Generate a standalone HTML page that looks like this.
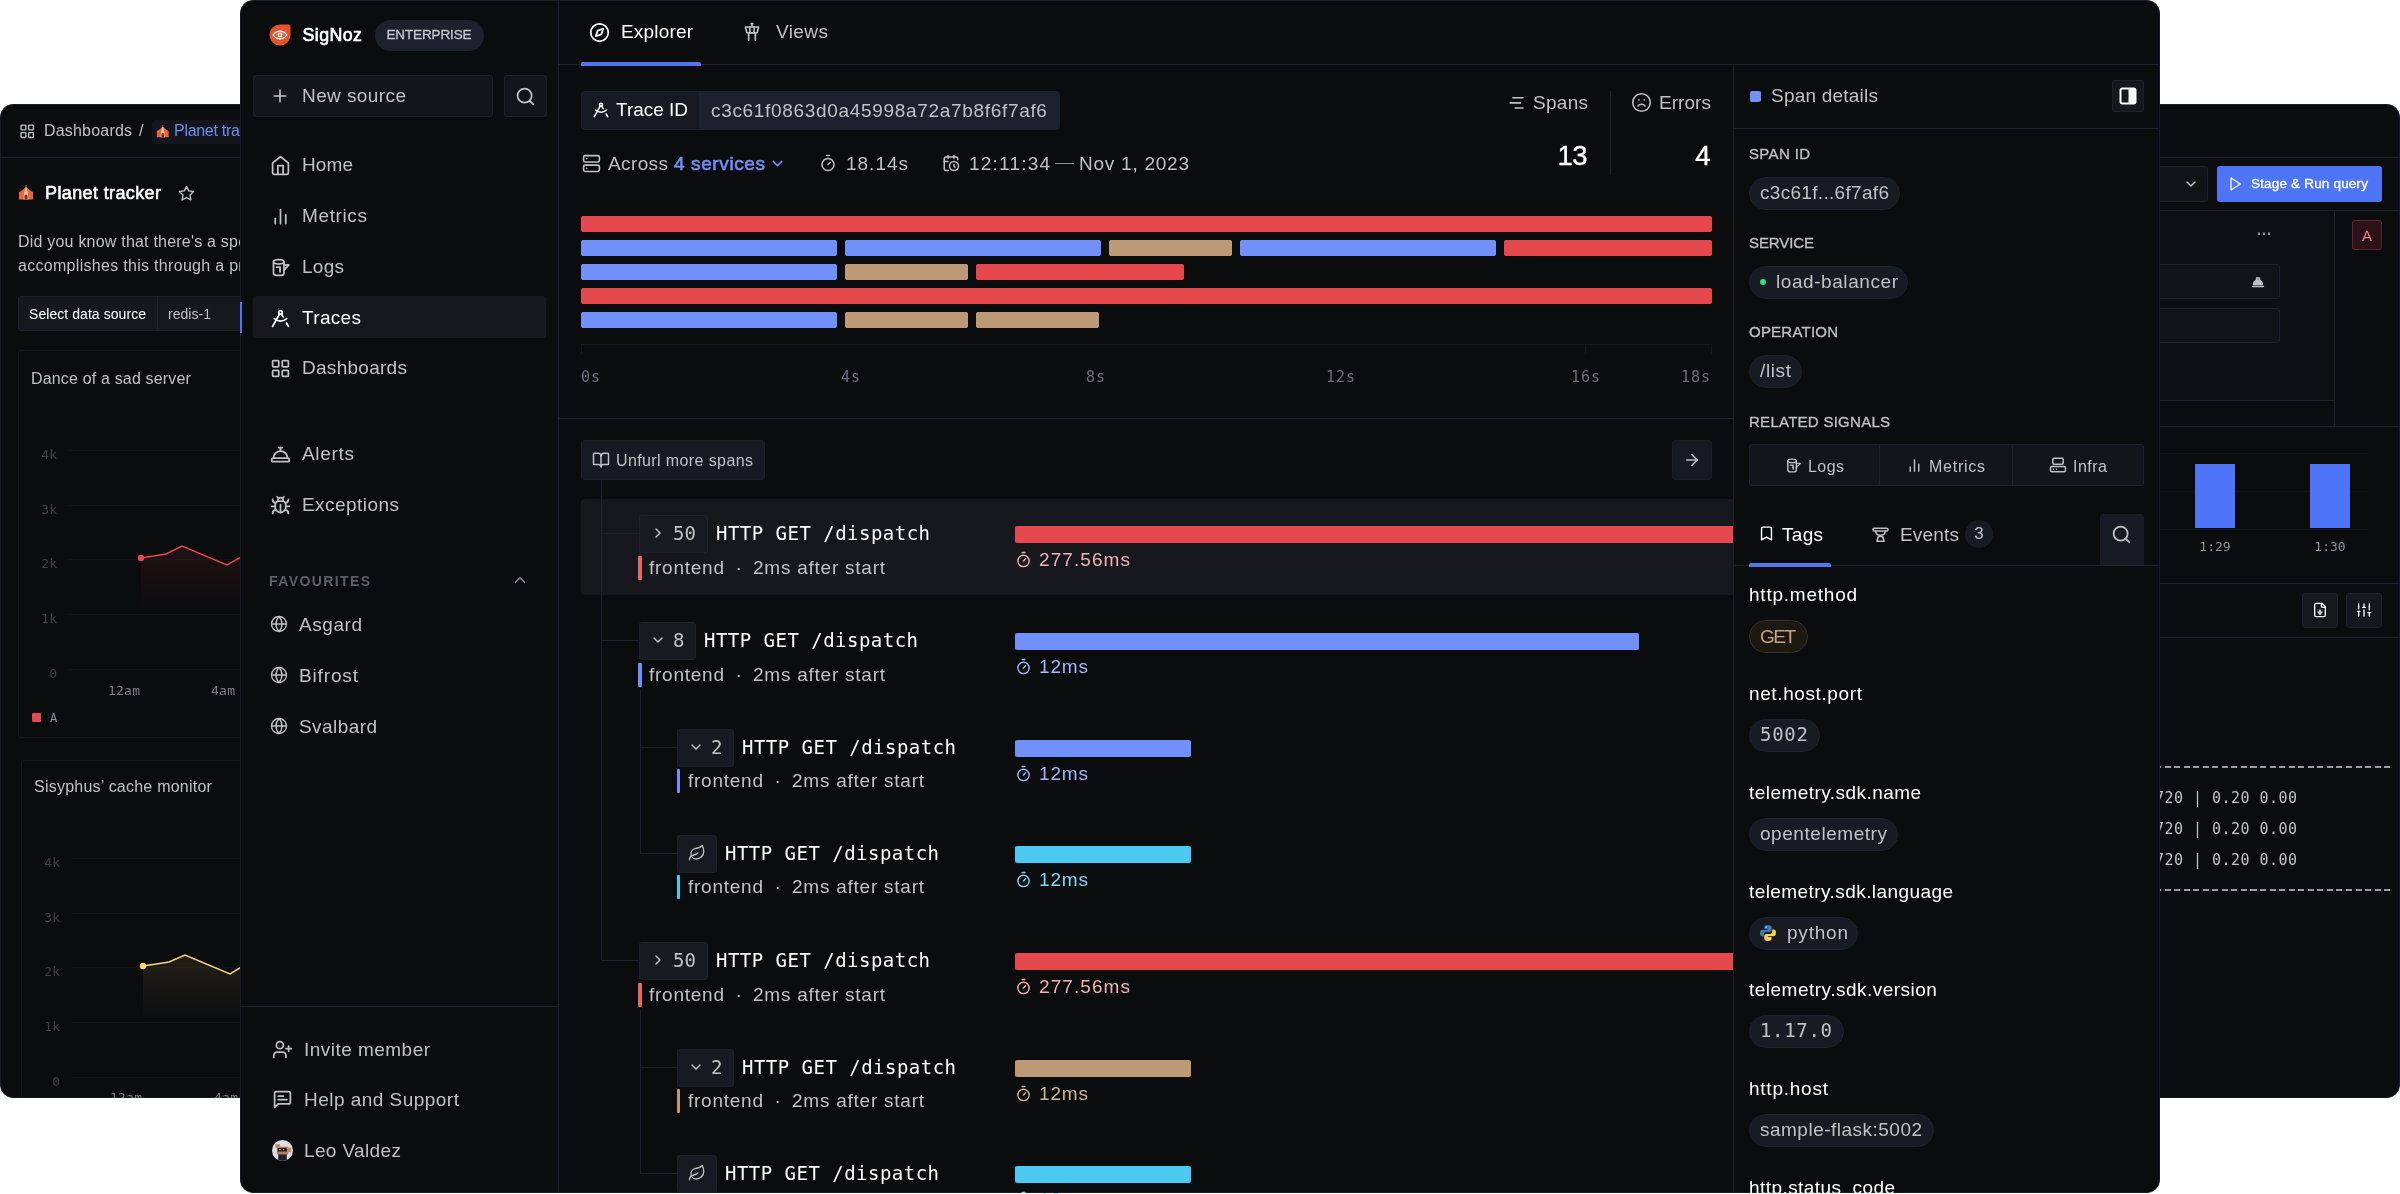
<!DOCTYPE html>
<html lang="en"><head><meta charset="utf-8"><title>SigNoz Traces</title>
<style>
html,body{margin:0;padding:0;background:#fff;}
body{width:2400px;height:1194px;position:relative;overflow:hidden;font-family:"Liberation Sans", sans-serif;}
.a{position:absolute;box-sizing:border-box;}
.t{white-space:nowrap;}
#stage{position:absolute;left:0;top:0;width:2400px;height:1194px;will-change:transform;}
</style></head>
<body>
<div id="stage">
<div class="a" style="left:0px;top:104px;width:300px;height:994px;background:#0b0c0e;border:1px solid #1a1d27;border-radius:13px 0 0 13px;"></div>
<div class="a" style="left:2100px;top:104px;width:300px;height:994px;background:#0b0c0e;border:1px solid #1a1d27;border-radius:0 13px 13px 0;"></div>
<svg class="a" style="left:19px;top:123px;" width="16.5" height="16.5" viewBox="0 0 24 24" fill="none" stroke="#c0c1c3" stroke-width="2" stroke-linecap="round" stroke-linejoin="round"><rect width="7" height="7" x="3" y="3" rx="1"/><rect width="7" height="7" x="14" y="3" rx="1"/><rect width="7" height="7" x="14" y="14" rx="1"/><rect width="7" height="7" x="3" y="14" rx="1"/></svg>
<div class="a t" id="t0" style="top:119.5px;font-size:16px;line-height:21px;color:#c0c1c3;left:44px;letter-spacing:0.19px;">Dashboards</div>
<div class="a t" id="t1" style="top:119.5px;font-size:16px;line-height:21px;color:#c0c1c3;left:139px;">/</div>
<div class="a" style="left:152px;top:119.5px;width:100px;height:24px;background:#13161f;border-radius:3px;"></div>
<svg class="a" style="left:155.5px;top:125px" width="13.5" height="13.5" viewBox="0 0 16 16"><path d="M8 1.500C5 5 2.500 6.500 1 7v7.500h14V7c-1.500-.500-4-2-7-5.500z" fill="#e8663c"/><path d="M8 1.500C7 5 6 7 5.500 14.500h5C10 7 9 5 8 1.500z" fill="#f7c9a8"/><path d="M6.500 14.500V11a1.500 1.500 0 0 1 3 0v3.500z" fill="#7a2e17"/><path d="M8 0v2" stroke="#e8663c" stroke-width="1"/></svg>
<div class="a t" id="t2" style="top:119.8px;font-size:16px;line-height:21px;color:#6e8ce6;left:174px;letter-spacing:-0.29px;">Planet tracker</div>
<div class="a" style="left:0px;top:157px;width:245px;height:1px;background:#1d212d;"></div>
<svg class="a" style="left:18px;top:184.7px" width="16" height="16" viewBox="0 0 16 16"><path d="M8 1.500C5 5 2.500 6.500 1 7v7.500h14V7c-1.500-.500-4-2-7-5.500z" fill="#e8663c"/><path d="M8 1.500C7 5 6 7 5.500 14.500h5C10 7 9 5 8 1.500z" fill="#f7c9a8"/><path d="M6.500 14.500V11a1.500 1.500 0 0 1 3 0v3.500z" fill="#7a2e17"/><path d="M8 0v2" stroke="#e8663c" stroke-width="1"/></svg>
<div class="a t" id="t3" style="top:181.8px;font-size:18px;line-height:23px;color:#ffffff;left:45px;letter-spacing:0.38px;-webkit-text-stroke:.550px #fff;">Planet tracker</div>
<svg class="a" style="left:178px;top:184.7px;" width="17" height="17" viewBox="0 0 24 24" fill="none" stroke="#c0c1c3" stroke-width="2" stroke-linecap="round" stroke-linejoin="round"><path d="M12 2l3.090 6.260L22 9.270l-5 4.870 1.180 6.880L12 17.770l-6.180 3.250L7 14.140 2 9.270l6.910-1.010z"/></svg>
<div class="a t" id="t4" style="top:230.5px;font-size:16px;line-height:21px;color:#c0c1c3;left:18px;letter-spacing:0.21px;">Did you know that there's a special</div>
<div class="a t" id="t5" style="top:254.5px;font-size:16px;line-height:21px;color:#c0c1c3;left:18px;letter-spacing:0.30px;">accomplishes this through a process</div>
<div class="a" style="left:18px;top:296px;width:230px;height:35px;background:#16181d;border:1px solid #1d212d;border-radius:3px;"></div>
<div class="a" style="left:157px;top:297px;width:1px;height:33px;background:#1d212d;"></div>
<div class="a t" id="t6" style="top:304.5px;font-size:14px;line-height:18px;color:#ffffff;left:29px;letter-spacing:0.06px;">Select data source</div>
<div class="a t" id="t7" style="top:304.5px;font-size:14px;line-height:18px;color:#c0c1c3;left:168px;letter-spacing:0.03px;">redis-1</div>
<div class="a" style="left:18px;top:350px;width:300px;height:388px;border:1px solid #16181d;border-radius:3px;"></div>
<div class="a t" id="t8" style="top:367.5px;font-size:16px;line-height:21px;color:#c0c1c3;left:31px;letter-spacing:0.17px;">Dance of a sad server</div>
<div class="a t" id="t9" style="top:445.5px;font-size:13px;line-height:17px;color:#3f4147;font-family:'DejaVu Sans Mono', 'Liberation Mono', monospace;right:2343px;">4k</div>
<div class="a" style="left:68px;top:450px;width:200px;height:1px;background:#111216;"></div>
<div class="a t" id="t10" style="top:500.5px;font-size:13px;line-height:17px;color:#3f4147;font-family:'DejaVu Sans Mono', 'Liberation Mono', monospace;right:2343px;">3k</div>
<div class="a" style="left:68px;top:505px;width:200px;height:1px;background:#111216;"></div>
<div class="a t" id="t11" style="top:554.5px;font-size:13px;line-height:17px;color:#3f4147;font-family:'DejaVu Sans Mono', 'Liberation Mono', monospace;right:2343px;">2k</div>
<div class="a" style="left:68px;top:559px;width:200px;height:1px;background:#111216;"></div>
<div class="a t" id="t12" style="top:609.5px;font-size:13px;line-height:17px;color:#3f4147;font-family:'DejaVu Sans Mono', 'Liberation Mono', monospace;right:2343px;">1k</div>
<div class="a" style="left:68px;top:614px;width:200px;height:1px;background:#111216;"></div>
<div class="a t" id="t13" style="top:664.5px;font-size:13px;line-height:17px;color:#3f4147;font-family:'DejaVu Sans Mono', 'Liberation Mono', monospace;right:2343px;">0</div>
<div class="a" style="left:68px;top:669px;width:200px;height:1px;background:#111216;"></div>
<svg class="a" style="left:0;top:0" width="245" height="1194"><defs><linearGradient id="g454" x1="0" y1="0" x2="0" y2="1"><stop offset="0" stop-color="#e5484d" stop-opacity=".100"/><stop offset="1" stop-color="#e5484d" stop-opacity="0"/></linearGradient></defs><polygon points="141,558 166,554 182,546 227,565 245,555 245,616 141,616" fill="url(#g454)"/><polyline points="141,558 166,554 182,546 227,565 245,555" fill="none" stroke="#e5484d" stroke-width="1.500"/><circle cx="141" cy="558" r="3.200" fill="#e5484d"/></svg>
<div class="a t" id="t14" style="top:681.5px;font-size:13px;line-height:17px;color:#7a7c82;font-family:'DejaVu Sans Mono', 'Liberation Mono', monospace;left:108px;letter-spacing:0.23px;">12am</div>
<div class="a t" id="t15" style="top:681.5px;font-size:13px;line-height:17px;color:#7a7c82;font-family:'DejaVu Sans Mono', 'Liberation Mono', monospace;left:211px;letter-spacing:0.26px;">4am</div>
<div class="a" style="left:32px;top:713px;width:9px;height:9px;background:#e5484d;border-radius:1px;"></div>
<div class="a t" id="t16" style="top:710.0px;font-size:12px;line-height:16px;color:#8d919d;font-family:'DejaVu Sans Mono', 'Liberation Mono', monospace;left:50px;">A</div>
<div class="a" style="left:21px;top:760px;width:300px;height:400px;border:1px solid #16181d;border-radius:3px;"></div>
<div class="a t" id="t17" style="top:775.5px;font-size:16px;line-height:21px;color:#c0c1c3;left:34px;letter-spacing:0.23px;">Sisyphus’ cache monitor</div>
<div class="a t" id="t18" style="top:853.5px;font-size:13px;line-height:17px;color:#3f4147;font-family:'DejaVu Sans Mono', 'Liberation Mono', monospace;right:2340px;">4k</div>
<div class="a" style="left:71px;top:858px;width:200px;height:1px;background:#111216;"></div>
<div class="a t" id="t19" style="top:908.5px;font-size:13px;line-height:17px;color:#3f4147;font-family:'DejaVu Sans Mono', 'Liberation Mono', monospace;right:2340px;">3k</div>
<div class="a" style="left:71px;top:913px;width:200px;height:1px;background:#111216;"></div>
<div class="a t" id="t20" style="top:962.5px;font-size:13px;line-height:17px;color:#3f4147;font-family:'DejaVu Sans Mono', 'Liberation Mono', monospace;right:2340px;">2k</div>
<div class="a" style="left:71px;top:967px;width:200px;height:1px;background:#111216;"></div>
<div class="a t" id="t21" style="top:1017.5px;font-size:13px;line-height:17px;color:#3f4147;font-family:'DejaVu Sans Mono', 'Liberation Mono', monospace;right:2340px;">1k</div>
<div class="a" style="left:71px;top:1022px;width:200px;height:1px;background:#111216;"></div>
<div class="a t" id="t22" style="top:1072.5px;font-size:13px;line-height:17px;color:#3f4147;font-family:'DejaVu Sans Mono', 'Liberation Mono', monospace;right:2340px;">0</div>
<div class="a" style="left:71px;top:1077px;width:200px;height:1px;background:#111216;"></div>
<svg class="a" style="left:0;top:0" width="245" height="1194"><defs><linearGradient id="g862" x1="0" y1="0" x2="0" y2="1"><stop offset="0" stop-color="#f5d77a" stop-opacity=".100"/><stop offset="1" stop-color="#f5d77a" stop-opacity="0"/></linearGradient></defs><polygon points="143,966 169,962 185,955 230,974 245,965 245,1024 143,1024" fill="url(#g862)"/><polyline points="143,966 169,962 185,955 230,974 245,965" fill="none" stroke="#f5d77a" stroke-width="1.500"/><circle cx="143" cy="966" r="3.200" fill="#f5d77a"/></svg>
<div class="a t" id="t23" style="top:1088.5px;font-size:13px;line-height:17px;color:#7a7c82;font-family:'DejaVu Sans Mono', 'Liberation Mono', monospace;left:110px;letter-spacing:0.23px;">12am</div>
<div class="a t" id="t24" style="top:1088.5px;font-size:13px;line-height:17px;color:#7a7c82;font-family:'DejaVu Sans Mono', 'Liberation Mono', monospace;left:214px;letter-spacing:0.26px;">4am</div>
<div class="a" style="left:0px;top:1098px;width:240px;height:96px;background:#ffffff;"></div>
<div class="a" style="left:2155px;top:157px;width:245px;height:1px;background:#1d212d;"></div>
<div class="a" style="left:2100px;top:166px;width:108px;height:36px;background:#121317;border:1px solid #1d212d;border-radius:3px;"></div>
<svg class="a" style="left:2183px;top:176px;" width="16" height="16" viewBox="0 0 24 24" fill="none" stroke="#c0c1c3" stroke-width="2.2" stroke-linecap="round" stroke-linejoin="round"><path d="m6 9 6 6 6-6"/></svg>
<div class="a" style="left:2217px;top:166px;width:165px;height:36px;background:#4e74f8;border-radius:3px;"></div>
<svg class="a" style="left:2227px;top:176px;" width="16" height="16" viewBox="0 0 24 24" fill="none" stroke="#ffffff" stroke-width="2" stroke-linecap="round" stroke-linejoin="round"><path d="M6 3l14 9-14 9z"/></svg>
<div class="a t" id="t25" style="top:175.0px;font-size:13.5px;line-height:18px;color:#ffffff;left:2251px;letter-spacing:0.18px;-webkit-text-stroke:.350px #fff;">Stage &amp; Run query</div>
<div class="a" style="left:2155px;top:211px;width:179px;height:189px;background:#0e0f13;"></div>
<div class="a" style="left:2155px;top:210px;width:245px;height:1px;background:#1d212d;"></div>
<div class="a" style="left:2334px;top:211px;width:1px;height:215px;background:#1d212d;"></div>
<div class="a t" id="t26" style="top:218.5px;font-size:16px;line-height:21px;color:#8d919d;font-weight:700;left:2264px;transform:translateX(-50%);">…</div>
<div class="a" style="left:2352px;top:220px;width:30px;height:30px;background:#2a1218;border:1px solid #5c2530;border-radius:3px;"></div>
<div class="a t" id="t27" style="top:226.0px;font-size:15px;line-height:20px;color:#f27a88;left:2367px;transform:translateX(-50%);">A</div>
<div class="a" style="left:2100px;top:264px;width:180px;height:35px;background:#121317;border:1px solid #1d212d;border-radius:3px;"></div>
<svg class="a" style="left:2251px;top:275px" width="14" height="13" viewBox="0 0 14 13" fill="none" stroke="#c0c1c3" stroke-width="1.400" stroke-linecap="round" stroke-linejoin="round"><path d="M1.500 11.500h11"/><path d="M2.500 9.500a4.500 4.500 0 0 1 9 0z" fill="#c0c1c3"/><path d="M5.500 5V3h3v2"/></svg>
<div class="a" style="left:2100px;top:308px;width:180px;height:35px;background:#121317;border:1px solid #1d212d;border-radius:3px;"></div>
<div class="a" style="left:2155px;top:400px;width:180px;height:1px;background:#1d212d;"></div>
<div class="a" style="left:2155px;top:426px;width:245px;height:1px;background:#1d212d;"></div>
<div class="a" style="left:2160px;top:453px;width:208px;height:1px;background:#111216;"></div>
<div class="a" style="left:2160px;top:491px;width:208px;height:1px;background:#111216;"></div>
<div class="a" style="left:2160px;top:529px;width:208px;height:1px;background:#111216;"></div>
<div class="a" style="left:2195px;top:464px;width:40px;height:64px;background:#4e74f8;"></div>
<div class="a" style="left:2310px;top:464px;width:40px;height:64px;background:#4e74f8;"></div>
<div class="a t" id="t28" style="top:537.5px;font-size:13px;line-height:17px;color:#8d919d;font-family:'DejaVu Sans Mono', 'Liberation Mono', monospace;left:2215px;transform:translateX(-50%);">1:29</div>
<div class="a t" id="t29" style="top:537.5px;font-size:13px;line-height:17px;color:#8d919d;font-family:'DejaVu Sans Mono', 'Liberation Mono', monospace;left:2330px;transform:translateX(-50%);">1:30</div>
<div class="a" style="left:2155px;top:583px;width:245px;height:1px;background:#1d212d;"></div>
<div class="a" style="left:2302px;top:593px;width:36px;height:35px;background:#16181d;border:1px solid #1d212d;border-radius:3px;"></div>
<svg class="a" style="left:2312px;top:602px;" width="16" height="16" viewBox="0 0 24 24" fill="none" stroke="#ffffff" stroke-width="2" stroke-linecap="round" stroke-linejoin="round"><path d="M15 2H6a2 2 0 0 0-2 2v16a2 2 0 0 0 2 2h12a2 2 0 0 0 2-2V7z"/><path d="M14 2v4a2 2 0 0 0 2 2h4"/><path d="M12 18v-6"/><path d="m9 15 3 3 3-3"/></svg>
<div class="a" style="left:2346px;top:593px;width:36px;height:35px;background:#16181d;border:1px solid #1d212d;border-radius:3px;"></div>
<svg class="a" style="left:2356px;top:602px;" width="16" height="16" viewBox="0 0 24 24" fill="none" stroke="#ffffff" stroke-width="2" stroke-linecap="round" stroke-linejoin="round"><path d="M4 21v-7"/><path d="M4 10V3"/><path d="M12 21v-9"/><path d="M12 8V3"/><path d="M20 21v-5"/><path d="M20 12V3"/><path d="M2 14h4"/><path d="M10 8h4"/><path d="M18 16h4"/></svg>
<div class="a" style="left:2155px;top:637px;width:245px;height:1px;background:#1d212d;"></div>
<div class="a" style="left:2155px;top:766px;width:237px;height:2px;background:repeating-linear-gradient(90deg,#9a9da6 0 6px,transparent 6px 9.550px);"></div>
<div class="a t" id="t30" style="top:788.0px;font-size:15px;line-height:20px;color:#c0c1c3;font-family:'DejaVu Sans Mono', 'Liberation Mono', monospace;left:2155px;letter-spacing:0.47px;">720 | 0.20 0.00</div>
<div class="a t" id="t31" style="top:819.0px;font-size:15px;line-height:20px;color:#c0c1c3;font-family:'DejaVu Sans Mono', 'Liberation Mono', monospace;left:2155px;letter-spacing:0.47px;">720 | 0.20 0.00</div>
<div class="a t" id="t32" style="top:850.0px;font-size:15px;line-height:20px;color:#c0c1c3;font-family:'DejaVu Sans Mono', 'Liberation Mono', monospace;left:2155px;letter-spacing:0.47px;">720 | 0.20 0.00</div>
<div class="a" style="left:2155px;top:889px;width:237px;height:2px;background:repeating-linear-gradient(90deg,#9a9da6 0 6px,transparent 6px 9.550px);"></div>
<div class="a" style="left:240px;top:0px;width:1920px;height:1193px;background:#0b0c0e;border:1px solid #1a1d27;border-radius:13px;"></div>
<div class="a" style="left:558px;top:1px;width:1px;height:1191px;background:#1d212d;"></div>
<div class="a" style="left:559px;top:64px;width:1600px;height:1px;background:#1d212d;"></div>
<div class="a" style="left:1733px;top:65px;width:1px;height:1128px;background:#1d212d;"></div>
<svg class="a" style="left:268px;top:23px" width="24" height="24" viewBox="0 0 24 24"><path d="M12 1.5h8.2a2.3 2.3 0 0 1 2.3 2.3V12A10.5 10.5 0 1 1 12 1.5z" fill="#e5532d"/><path d="M5.2 12c1.8-2.6 4-3.9 6.8-3.9s5 1.300 6.800 3.900c-1.800 2.600-4 3.900-6.800 3.900S7 14.600 5.200 12z" fill="none" stroke="#fff" stroke-width="1.300"/><circle cx="12" cy="12" r="2.500" fill="#fff"/><circle cx="12" cy="12" r="1" fill="#e5532d"/></svg>
<div class="a t" id="t33" style="top:23.9px;font-size:17.8px;line-height:23px;color:#ffffff;left:302.5px;letter-spacing:0.43px;-webkit-text-stroke:.650px #fff;">SigNoz</div>
<div class="a" style="left:375px;top:20px;width:109px;height:31px;background:#1d212d;border-radius:16px;"></div>
<div class="a t" id="t34" style="top:25.8px;font-size:13.5px;line-height:18px;color:#c5c7cc;left:386.5px;letter-spacing:-0.14px;-webkit-text-stroke:.300px #c5c7cc;">ENTERPRISE</div>
<div class="a" style="left:253px;top:75px;width:240px;height:42px;background:#13151b;border:1px solid #1d212d;border-radius:3px;"></div>
<svg class="a" style="left:270px;top:86px;" width="20" height="20" viewBox="0 0 24 24" fill="none" stroke="#c0c1c3" stroke-width="2" stroke-linecap="round" stroke-linejoin="round"><path d="M5 12h14"/><path d="M12 5v14"/></svg>
<div class="a t" id="t35" style="top:83.0px;font-size:19px;line-height:25px;color:#c0c1c3;left:302px;letter-spacing:0.41px;">New source</div>
<div class="a" style="left:504px;top:75px;width:43px;height:42px;background:#13151b;border:1px solid #1d212d;border-radius:3px;"></div>
<svg class="a" style="left:515px;top:86px;" width="21" height="21" viewBox="0 0 24 24" fill="none" stroke="#c0c1c3" stroke-width="2" stroke-linecap="round" stroke-linejoin="round"><circle cx="11" cy="11" r="8"/><path d="m21 21-4.3-4.3"/></svg>
<div class="a" style="left:253px;top:296px;width:293px;height:42px;background:#16181d;border-radius:3px;"></div>
<div class="a" style="left:240px;top:302px;width:2px;height:31px;background:#4e74f8;"></div>
<svg class="a" style="left:269.5px;top:154.5px;" width="21" height="21" viewBox="0 0 24 24" fill="none" stroke="#c0c1c3" stroke-width="2" stroke-linecap="round" stroke-linejoin="round"><path d="m3 9 9-7 9 7v11a2 2 0 0 1-2 2H5a2 2 0 0 1-2-2z"/><path d="M9 22V12h6v10"/></svg>
<div class="a t" id="t36" style="top:152.0px;font-size:19px;line-height:25px;color:#c0c1c3;left:302px;letter-spacing:0.10px;">Home</div>
<svg class="a" style="left:269.5px;top:205.5px;" width="21" height="21" viewBox="0 0 24 24" fill="none" stroke="#c0c1c3" stroke-width="2" stroke-linecap="round" stroke-linejoin="round"><path d="M18 20V10"/><path d="M12 20V4"/><path d="M6 20v-6"/></svg>
<div class="a t" id="t37" style="top:203.0px;font-size:19px;line-height:25px;color:#c0c1c3;left:302px;letter-spacing:0.63px;">Metrics</div>
<svg class="a" style="left:269.5px;top:256.5px;" width="21" height="21" viewBox="0 0 24 24" fill="none" stroke="#c0c1c3" stroke-width="2" stroke-linecap="round" stroke-linejoin="round"><ellipse cx="10" cy="5.500" rx="6" ry="2.500"/><path d="M4 5.500V18a3 3 0 0 0 3 3h6a3 3 0 0 0 3-3V5.500"/><path d="M16 9h5.500L16 15"/><path d="M7.500 11.500h4v3"/><path d="M11.500 14.500v2.500"/></svg>
<div class="a t" id="t38" style="top:254.0px;font-size:19px;line-height:25px;color:#c0c1c3;left:302px;letter-spacing:0.27px;">Logs</div>
<svg class="a" style="left:269.5px;top:307.5px;" width="21" height="21" viewBox="0 0 24 24" fill="none" stroke="#ffffff" stroke-width="2" stroke-linecap="round" stroke-linejoin="round"><path d="m12.99 6.74 1.93 3.44"/><path d="M19.136 12a10 10 0 0 1-14.271 0"/><path d="m21 21-2.16-3.84"/><path d="m3 21 8.02-14.26"/><circle cx="12" cy="5" r="2"/></svg>
<div class="a t" id="t39" style="top:305.0px;font-size:19px;line-height:25px;color:#ffffff;left:302px;letter-spacing:0.33px;">Traces</div>
<svg class="a" style="left:269.5px;top:357.5px;" width="21" height="21" viewBox="0 0 24 24" fill="none" stroke="#c0c1c3" stroke-width="2" stroke-linecap="round" stroke-linejoin="round"><rect width="7" height="7" x="3" y="3" rx="1"/><rect width="7" height="7" x="14" y="3" rx="1"/><rect width="7" height="7" x="14" y="14" rx="1"/><rect width="7" height="7" x="3" y="14" rx="1"/></svg>
<div class="a t" id="t40" style="top:355.0px;font-size:19px;line-height:25px;color:#c0c1c3;left:302px;letter-spacing:0.28px;">Dashboards</div>
<svg class="a" style="left:269.5px;top:443.5px;" width="21" height="21" viewBox="0 0 24 24" fill="none" stroke="#c0c1c3" stroke-width="2" stroke-linecap="round" stroke-linejoin="round"><path d="M3 20a1 1 0 0 1-1-1v-1a2 2 0 0 1 2-2h16a2 2 0 0 1 2 2v1a1 1 0 0 1-1 1Z"/><path d="M20 16a8 8 0 1 0-16 0"/><path d="M12 4v4"/><path d="M10 4h4"/></svg>
<div class="a t" id="t41" style="top:441.0px;font-size:19px;line-height:25px;color:#c0c1c3;left:302px;letter-spacing:0.68px;">Alerts</div>
<svg class="a" style="left:269.5px;top:494.5px;" width="21" height="21" viewBox="0 0 24 24" fill="none" stroke="#c0c1c3" stroke-width="2" stroke-linecap="round" stroke-linejoin="round"><path d="m8 2 1.88 1.88"/><path d="M14.12 3.88 16 2"/><path d="M9 7.13v-1a3.003 3.003 0 1 1 6 0v1"/><path d="M12 20c-3.3 0-6-2.7-6-6v-3a4 4 0 0 1 4-4h4a4 4 0 0 1 4 4v3c0 3.3-2.7 6-6 6"/><path d="M12 20v-9"/><path d="M6.53 9C4.6 8.8 3 7.1 3 5"/><path d="M6 13H2"/><path d="M3 21c0-2.1 1.7-3.9 3.8-4"/><path d="M20.97 5c0 2.1-1.6 3.8-3.5 4"/><path d="M22 13h-4"/><path d="M17.2 17c2.1.1 3.8 1.9 3.8 4"/></svg>
<div class="a t" id="t42" style="top:492.0px;font-size:19px;line-height:25px;color:#c0c1c3;left:302px;letter-spacing:0.45px;">Exceptions</div>
<div class="a t" id="t43" style="top:572.0px;font-size:14px;line-height:18px;color:#5c5f68;font-weight:700;left:269px;letter-spacing:1.40px;">FAVOURITES</div>
<svg class="a" style="left:511px;top:571px;" width="18" height="18" viewBox="0 0 24 24" fill="none" stroke="#8d919d" stroke-width="2" stroke-linecap="round" stroke-linejoin="round"><path d="m18 15-6-6-6 6"/></svg>
<svg class="a" style="left:270px;top:615px;" width="18" height="18" viewBox="0 0 24 24" fill="none" stroke="#c0c1c3" stroke-width="1.8" stroke-linecap="round" stroke-linejoin="round"><circle cx="12" cy="12" r="10"/><path d="M12 2a14.5 14.5 0 0 0 0 20 14.5 14.5 0 0 0 0-20"/><path d="M2 12h20"/></svg>
<div class="a t" id="t44" style="top:611.5px;font-size:19px;line-height:25px;color:#c0c1c3;left:299px;letter-spacing:0.56px;">Asgard</div>
<svg class="a" style="left:270px;top:666px;" width="18" height="18" viewBox="0 0 24 24" fill="none" stroke="#c0c1c3" stroke-width="1.8" stroke-linecap="round" stroke-linejoin="round"><circle cx="12" cy="12" r="10"/><path d="M12 2a14.5 14.5 0 0 0 0 20 14.5 14.5 0 0 0 0-20"/><path d="M2 12h20"/></svg>
<div class="a t" id="t45" style="top:662.5px;font-size:19px;line-height:25px;color:#c0c1c3;left:299px;letter-spacing:0.86px;">Bifrost</div>
<svg class="a" style="left:270px;top:717px;" width="18" height="18" viewBox="0 0 24 24" fill="none" stroke="#c0c1c3" stroke-width="1.8" stroke-linecap="round" stroke-linejoin="round"><circle cx="12" cy="12" r="10"/><path d="M12 2a14.5 14.5 0 0 0 0 20 14.5 14.5 0 0 0 0-20"/><path d="M2 12h20"/></svg>
<div class="a t" id="t46" style="top:713.5px;font-size:19px;line-height:25px;color:#c0c1c3;left:299px;letter-spacing:0.43px;">Svalbard</div>
<div class="a" style="left:240px;top:1006px;width:318px;height:1px;background:#1d212d;"></div>
<svg class="a" style="left:272px;top:1039px;" width="21" height="21" viewBox="0 0 24 24" fill="none" stroke="#c0c1c3" stroke-width="2" stroke-linecap="round" stroke-linejoin="round"><path d="M16 21v-2a4 4 0 0 0-4-4H6a4 4 0 0 0-4 4v2"/><circle cx="9" cy="7" r="4"/><path d="M19 8v6"/><path d="M22 11h-6"/></svg>
<div class="a t" id="t47" style="top:1036.5px;font-size:19px;line-height:25px;color:#c0c1c3;left:304px;letter-spacing:0.47px;">Invite member</div>
<svg class="a" style="left:272px;top:1089px;" width="21" height="21" viewBox="0 0 24 24" fill="none" stroke="#c0c1c3" stroke-width="2" stroke-linecap="round" stroke-linejoin="round"><path d="M21 15a2 2 0 0 1-2 2H7l-4 4V5a2 2 0 0 1 2-2h14a2 2 0 0 1 2 2z"/><path d="M13 8H7"/><path d="M17 12H7"/></svg>
<div class="a t" id="t48" style="top:1086.5px;font-size:19px;line-height:25px;color:#c0c1c3;left:304px;letter-spacing:0.47px;">Help and Support</div>
<svg class="a" style="left:272px;top:1140px" width="21" height="21" viewBox="0 0 22 22"><defs><clipPath id="av"><circle cx="11" cy="11" r="11"/></clipPath></defs><g clip-path="url(#av)"><rect width="22" height="22" fill="#dcdfe9"/><rect x="5" y="7" width="12" height="8" fill="#b97a58"/><rect x="3.500" y="4.500" width="5" height="3.500" fill="#c67f5a"/><rect x="16" y="8" width="4" height="5" fill="#c98a68"/><rect x="6" y="8.500" width="9.500" height="3.500" fill="#17171b"/><rect x="6.500" y="15" width="9" height="8" fill="#202127"/><rect x="7.500" y="9.300" width="1.500" height="1.500" fill="#fff" opacity=".700"/><rect x="11.500" y="9.300" width="1.500" height="1.500" fill="#fff" opacity=".700"/></g></svg>
<div class="a t" id="t49" style="top:1137.5px;font-size:19px;line-height:25px;color:#c0c1c3;left:304px;letter-spacing:0.37px;">Leo Valdez</div>
<svg class="a" style="left:589px;top:22px;" width="21" height="21" viewBox="0 0 24 24" fill="none" stroke="#ffffff" stroke-width="2" stroke-linecap="round" stroke-linejoin="round"><circle cx="12" cy="12" r="10"/><path d="m16.24 7.76-2.12 6.360-6.360 2.120 2.120-6.360z"/></svg>
<div class="a t" id="t50" style="top:18.8px;font-size:19px;line-height:25px;color:#ffffff;left:621px;letter-spacing:0.18px;">Explorer</div>
<svg class="a" style="left:742px;top:22px;" width="20" height="20" viewBox="0 0 24 24" fill="none" stroke="#c0c1c3" stroke-width="2" stroke-linecap="round" stroke-linejoin="round"><path d="M18.2 12.270 20 6H4l1.800 6.270a1 1 0 0 0 .950.730h10.500a1 1 0 0 0 .960-.730Z"/><path d="M8 13v9"/><path d="M16 22v-9"/><path d="m9 6 1 7"/><path d="m15 6-1 7"/><path d="M12 6V2"/><path d="M13 2h-2"/></svg>
<div class="a t" id="t51" style="top:18.8px;font-size:19px;line-height:25px;color:#c0c1c3;left:776px;letter-spacing:0.41px;">Views</div>
<div class="a" style="left:581px;top:62px;width:120px;height:3.5px;background:#5577ee;border-radius:2px 2px 0 0;"></div>
<div class="a" style="left:581px;top:91px;width:479px;height:39px;background:#1d212d;border:1px solid #1d212d;border-radius:4px;"></div>
<div class="a" style="left:582px;top:92px;width:117px;height:37px;background:#171a22;border-radius:3px 0 0 3px;"></div>
<svg class="a" style="left:592px;top:101px;" width="18" height="18" viewBox="0 0 24 24" fill="none" stroke="#ffffff" stroke-width="2" stroke-linecap="round" stroke-linejoin="round"><path d="m12.99 6.74 1.93 3.44"/><path d="M19.136 12a10 10 0 0 1-14.271 0"/><path d="m21 21-2.16-3.84"/><path d="m3 21 8.02-14.26"/><circle cx="12" cy="5" r="2"/></svg>
<div class="a t" id="t52" style="top:97.0px;font-size:19px;line-height:25px;color:#ffffff;left:616px;letter-spacing:-0.02px;">Trace ID</div>
<div class="a t" id="t53" style="top:97.5px;font-size:19px;line-height:25px;color:#c0c1c3;left:711px;letter-spacing:0.68px;">c3c61f0863d0a45998a72a7b8f6f7af6</div>
<svg class="a" style="left:581.5px;top:153.5px;" width="19" height="19" viewBox="0 0 24 24" fill="none" stroke="#c0c1c3" stroke-width="2" stroke-linecap="round" stroke-linejoin="round"><rect width="20" height="8" x="2" y="2" rx="2"/><rect width="20" height="8" x="2" y="14" rx="2"/><path d="M6 6h.01"/><path d="M6 18h.01"/></svg>
<div class="a t" id="t54" style="top:150.5px;font-size:19px;line-height:25px;color:#c0c1c3;left:608px;letter-spacing:0.38px;">Across</div>
<div class="a t" id="t55" style="top:150.5px;font-size:19px;line-height:25px;color:#7190f9;left:674px;letter-spacing:0.61px;-webkit-text-stroke:.600px #7190f9;">4 services</div>
<svg class="a" style="left:769px;top:155px;" width="17" height="17" viewBox="0 0 24 24" fill="none" stroke="#7190f9" stroke-width="2" stroke-linecap="round" stroke-linejoin="round"><path d="m6 9 6 6 6-6"/></svg>
<svg class="a" style="left:819px;top:154px;" width="18" height="18" viewBox="0 0 24 24" fill="none" stroke="#c0c1c3" stroke-width="2" stroke-linecap="round" stroke-linejoin="round"><path d="M10 2h4"/><path d="m12 14 3-3"/><circle cx="12" cy="14" r="8"/></svg>
<div class="a t" id="t56" style="top:150.5px;font-size:19px;line-height:25px;color:#c0c1c3;left:846px;letter-spacing:0.99px;">18.14s</div>
<svg class="a" style="left:942px;top:154px;" width="18" height="18" viewBox="0 0 24 24" fill="none" stroke="#c0c1c3" stroke-width="2" stroke-linecap="round" stroke-linejoin="round"><path d="M21 7.500V6a2 2 0 0 0-2-2H5a2 2 0 0 0-2 2v14a2 2 0 0 0 2 2h3.500"/><path d="M16 2v4"/><path d="M8 2v4"/><path d="M3 10h5"/><path d="M17.500 17.500 16 16.300V14"/><circle cx="16" cy="16" r="6"/></svg>
<div class="a t" id="t57" style="top:150.5px;font-size:19px;line-height:25px;color:#c0c1c3;left:969px;letter-spacing:1.21px;">12:11:34</div>
<div class="a" style="left:1055px;top:163px;width:19px;height:1px;background:#8d919d;"></div>
<div class="a t" id="t58" style="top:150.5px;font-size:19px;line-height:25px;color:#c0c1c3;left:1079px;letter-spacing:0.75px;">Nov 1, 2023</div>
<svg class="a" style="left:1509px;top:94px" width="16" height="17" viewBox="0 0 16 17" fill="none" stroke="#c0c1c3" stroke-width="1.600" stroke-linecap="round"><path d="M3.800 3.800h10.200"/><path d="M1.200 8.900h10.300"/><path d="M6.200 14h7.800"/></svg>
<div class="a t" id="t59" style="top:89.5px;font-size:19px;line-height:25px;color:#c0c1c3;left:1533px;letter-spacing:0.28px;">Spans</div>
<div class="a t" id="t60" style="top:138.3px;font-size:27.5px;line-height:36px;color:#ffffff;right:813px;letter-spacing:-0.59px;-webkit-text-stroke:.350px #fff;">13</div>
<div class="a" style="left:1610px;top:91px;width:1px;height:84px;background:#1d212d;"></div>
<svg class="a" style="left:1631px;top:92px;" width="21" height="21" viewBox="0 0 24 24" fill="none" stroke="#c0c1c3" stroke-width="1.8" stroke-linecap="round" stroke-linejoin="round"><circle cx="12" cy="12" r="10"/><path d="M16 16s-1.500-2-4-2-4 2-4 2"/><path d="M9 9h.01"/><path d="M15 9h.01"/></svg>
<div class="a t" id="t61" style="top:89.5px;font-size:19px;line-height:25px;color:#c0c1c3;left:1659px;letter-spacing:0.05px;">Errors</div>
<div class="a t" id="t62" style="top:138.3px;font-size:27.5px;line-height:36px;color:#ffffff;right:689.5px;-webkit-text-stroke:.350px #fff;">4</div>
<div class="a" style="left:581px;top:216px;width:1131px;height:16px;background:#e5484d;border-radius:2px;"></div>
<div class="a" style="left:581px;top:240px;width:256px;height:16px;background:#7190f9;border-radius:2px;"></div>
<div class="a" style="left:845px;top:240px;width:256px;height:16px;background:#7190f9;border-radius:2px;"></div>
<div class="a" style="left:1109px;top:240px;width:123px;height:16px;background:#bd9977;border-radius:2px;"></div>
<div class="a" style="left:1240px;top:240px;width:256px;height:16px;background:#7190f9;border-radius:2px;"></div>
<div class="a" style="left:1504px;top:240px;width:208px;height:16px;background:#e5484d;border-radius:2px;"></div>
<div class="a" style="left:581px;top:264px;width:256px;height:16px;background:#7190f9;border-radius:2px;"></div>
<div class="a" style="left:845px;top:264px;width:123px;height:16px;background:#bd9977;border-radius:2px;"></div>
<div class="a" style="left:976px;top:264px;width:208px;height:16px;background:#e5484d;border-radius:2px;"></div>
<div class="a" style="left:581px;top:288px;width:1131px;height:16px;background:#e5484d;border-radius:2px;"></div>
<div class="a" style="left:581px;top:312px;width:256px;height:16px;background:#7190f9;border-radius:2px;"></div>
<div class="a" style="left:845px;top:312px;width:123px;height:16px;background:#bd9977;border-radius:2px;"></div>
<div class="a" style="left:976px;top:312px;width:123px;height:16px;background:#bd9977;border-radius:2px;"></div>
<div class="a" style="left:581px;top:344px;width:1131px;height:1px;background:#15171c;"></div>
<div class="a" style="left:581px;top:344px;width:1px;height:10px;background:#15171c;"></div>
<div class="a" style="left:1585px;top:344px;width:1px;height:10px;background:#15171c;"></div>
<div class="a" style="left:1711px;top:344px;width:1px;height:10px;background:#15171c;"></div>
<div class="a t" id="t63" style="top:367.0px;font-size:15px;line-height:20px;color:#6b6e78;font-family:'DejaVu Sans Mono', 'Liberation Mono', monospace;left:581px;letter-spacing:0.94px;">0s</div>
<div class="a t" id="t64" style="top:367.0px;font-size:15px;line-height:20px;color:#6b6e78;font-family:'DejaVu Sans Mono', 'Liberation Mono', monospace;left:841px;letter-spacing:0.94px;">4s</div>
<div class="a t" id="t65" style="top:367.0px;font-size:15px;line-height:20px;color:#6b6e78;font-family:'DejaVu Sans Mono', 'Liberation Mono', monospace;left:1086px;letter-spacing:0.94px;">8s</div>
<div class="a t" id="t66" style="top:367.0px;font-size:15px;line-height:20px;color:#6b6e78;font-family:'DejaVu Sans Mono', 'Liberation Mono', monospace;left:1326px;letter-spacing:0.95px;">12s</div>
<div class="a t" id="t67" style="top:367.0px;font-size:15px;line-height:20px;color:#6b6e78;font-family:'DejaVu Sans Mono', 'Liberation Mono', monospace;left:1571px;letter-spacing:0.95px;">16s</div>
<div class="a t" id="t68" style="top:367.0px;font-size:15px;line-height:20px;color:#6b6e78;font-family:'DejaVu Sans Mono', 'Liberation Mono', monospace;right:689px;letter-spacing:0.95px;">18s</div>
<div class="a" style="left:559px;top:418px;width:1174px;height:1px;background:#1d212d;"></div>
<div class="a" style="left:581px;top:440px;width:184px;height:40px;background:#171a22;border:1px solid #1b1e29;border-radius:3px;"></div>
<svg class="a" style="left:592px;top:451px;" width="18" height="18" viewBox="0 0 24 24" fill="none" stroke="#c0c1c3" stroke-width="2" stroke-linecap="round" stroke-linejoin="round"><path d="M12 7v14"/><path d="M3 18a1 1 0 0 1-1-1V4a1 1 0 0 1 1-1h5a4 4 0 0 1 4 4 4 4 0 0 1 4-4h5a1 1 0 0 1 1 1v13a1 1 0 0 1-1 1h-6a3 3 0 0 0-3 3 3 3 0 0 0-3-3z"/></svg>
<div class="a t" id="t69" style="top:449.5px;font-size:16px;line-height:21px;color:#c0c1c3;left:616px;letter-spacing:0.39px;">Unfurl more spans</div>
<div class="a" style="left:1672px;top:440px;width:40px;height:40px;background:#171a22;border:1px solid #1b1e29;border-radius:3px;"></div>
<svg class="a" style="left:1683px;top:451px;" width="18" height="18" viewBox="0 0 24 24" fill="none" stroke="#c0c1c3" stroke-width="2" stroke-linecap="round" stroke-linejoin="round"><path d="M5 12h14"/><path d="m12 5 7 7-7 7"/></svg>
<div class="a" style="left:581px;top:499px;width:1152px;height:95.5px;background:#16181d;border-radius:4px 0 0 4px;"></div>
<div class="a" style="left:601px;top:480px;width:1px;height:481px;background:#1d212d;"></div>
<div class="a" style="left:640px;top:690px;width:1px;height:164px;background:#1d212d;"></div>
<div class="a" style="left:640px;top:1010px;width:1px;height:164px;background:#1d212d;"></div>
<div class="a" style="left:601px;top:533px;width:38px;height:1px;background:#1d212d;"></div>
<div class="a" style="left:601px;top:640px;width:38px;height:1px;background:#1d212d;"></div>
<div class="a" style="left:601px;top:960px;width:38px;height:1px;background:#1d212d;"></div>
<div class="a" style="left:640px;top:747px;width:37px;height:1px;background:#1d212d;"></div>
<div class="a" style="left:640px;top:853px;width:37px;height:1px;background:#1d212d;"></div>
<div class="a" style="left:640px;top:1067px;width:37px;height:1px;background:#1d212d;"></div>
<div class="a" style="left:640px;top:1173px;width:37px;height:1px;background:#1d212d;"></div>
<div class="a" style="left:639px;top:515px;width:69px;height:38px;background:#171a20;border:1px solid #1d212d;border-radius:3px;"></div>
<svg class="a" style="left:650px;top:525px;" width="16" height="16" viewBox="0 0 24 24" fill="none" stroke="#c0c1c3" stroke-width="2.2" stroke-linecap="round" stroke-linejoin="round"><path d="m9 18 6-6-6-6"/></svg>
<div class="a t" id="t70" style="top:520.5px;font-size:19px;line-height:25px;color:#c0c1c3;font-family:'DejaVu Sans Mono', 'Liberation Mono', monospace;left:673px;letter-spacing:0.11px;">50</div>
<div class="a t" id="t71" style="top:521.2px;font-size:19px;line-height:25px;color:#ffffff;font-family:'DejaVu Sans Mono', 'Liberation Mono', monospace;left:716px;letter-spacing:0.48px;">HTTP GET /dispatch</div>
<div class="a" style="left:638.3px;top:556px;width:3.3px;height:24px;background:#e3676b;border-radius:1px;"></div>
<div class="a t" id="t72" style="top:554.5px;font-size:19px;line-height:25px;color:#c0c1c3;left:649px;letter-spacing:0.75px;">frontend</div>
<div class="a t" id="t73" style="top:554.5px;font-size:19px;line-height:25px;color:#c0c1c3;left:735.5px;">·</div>
<div class="a t" id="t74" style="top:554.5px;font-size:19px;line-height:25px;color:#c0c1c3;left:753px;letter-spacing:0.76px;">2ms after start</div>
<div class="a" style="left:1014.5px;top:526.4px;width:718.5px;height:16.2px;background:#e5484d;border-radius:2px 0 0 2px;"></div>
<svg class="a" style="left:1015px;top:551px;" width="17" height="17" viewBox="0 0 24 24" fill="none" stroke="#f0b2b1" stroke-width="2" stroke-linecap="round" stroke-linejoin="round"><path d="M10 2h4"/><path d="m12 14 3-3"/><circle cx="12" cy="14" r="8"/></svg>
<div class="a t" id="t75" style="top:546.5px;font-size:19px;line-height:25px;color:#f0b2b1;left:1039px;letter-spacing:1.08px;">277.56ms</div>
<div class="a" style="left:639px;top:622px;width:57px;height:38px;background:#171a20;border:1px solid #1d212d;border-radius:3px;"></div>
<svg class="a" style="left:650px;top:632px;" width="16" height="16" viewBox="0 0 24 24" fill="none" stroke="#c0c1c3" stroke-width="2.2" stroke-linecap="round" stroke-linejoin="round"><path d="m6 9 6 6 6-6"/></svg>
<div class="a t" id="t76" style="top:627.5px;font-size:19px;line-height:25px;color:#c0c1c3;font-family:'DejaVu Sans Mono', 'Liberation Mono', monospace;left:673px;letter-spacing:-0.45px;">8</div>
<div class="a t" id="t77" style="top:628.2px;font-size:19px;line-height:25px;color:#ffffff;font-family:'DejaVu Sans Mono', 'Liberation Mono', monospace;left:704px;letter-spacing:0.48px;">HTTP GET /dispatch</div>
<div class="a" style="left:638.3px;top:663px;width:3.3px;height:24px;background:#7190f9;border-radius:1px;"></div>
<div class="a t" id="t78" style="top:661.5px;font-size:19px;line-height:25px;color:#c0c1c3;left:649px;letter-spacing:0.75px;">frontend</div>
<div class="a t" id="t79" style="top:661.5px;font-size:19px;line-height:25px;color:#c0c1c3;left:735.5px;">·</div>
<div class="a t" id="t80" style="top:661.5px;font-size:19px;line-height:25px;color:#c0c1c3;left:753px;letter-spacing:0.76px;">2ms after start</div>
<div class="a" style="left:1014.5px;top:633.4px;width:624.5px;height:16.2px;background:#7190f9;border-radius:2px;"></div>
<svg class="a" style="left:1015px;top:658px;" width="17" height="17" viewBox="0 0 24 24" fill="none" stroke="#a3b5fb" stroke-width="2" stroke-linecap="round" stroke-linejoin="round"><path d="M10 2h4"/><path d="m12 14 3-3"/><circle cx="12" cy="14" r="8"/></svg>
<div class="a t" id="t81" style="top:653.5px;font-size:19px;line-height:25px;color:#a3b5fb;left:1039px;letter-spacing:0.84px;">12ms</div>
<div class="a" style="left:677px;top:729px;width:57px;height:38px;background:#171a20;border:1px solid #1d212d;border-radius:3px;"></div>
<svg class="a" style="left:688px;top:739px;" width="16" height="16" viewBox="0 0 24 24" fill="none" stroke="#c0c1c3" stroke-width="2.2" stroke-linecap="round" stroke-linejoin="round"><path d="m6 9 6 6 6-6"/></svg>
<div class="a t" id="t82" style="top:734.5px;font-size:19px;line-height:25px;color:#c0c1c3;font-family:'DejaVu Sans Mono', 'Liberation Mono', monospace;left:711px;letter-spacing:-0.45px;">2</div>
<div class="a t" id="t83" style="top:735.2px;font-size:19px;line-height:25px;color:#ffffff;font-family:'DejaVu Sans Mono', 'Liberation Mono', monospace;left:742px;letter-spacing:0.48px;">HTTP GET /dispatch</div>
<div class="a" style="left:677.2px;top:769px;width:3.3px;height:24px;background:#7190f9;border-radius:1px;"></div>
<div class="a t" id="t84" style="top:767.5px;font-size:19px;line-height:25px;color:#c0c1c3;left:688px;letter-spacing:0.75px;">frontend</div>
<div class="a t" id="t85" style="top:767.5px;font-size:19px;line-height:25px;color:#c0c1c3;left:774.5px;">·</div>
<div class="a t" id="t86" style="top:767.5px;font-size:19px;line-height:25px;color:#c0c1c3;left:792px;letter-spacing:0.76px;">2ms after start</div>
<div class="a" style="left:1014.5px;top:740.4px;width:176.5px;height:16.2px;background:#7190f9;border-radius:2px;"></div>
<svg class="a" style="left:1015px;top:765px;" width="17" height="17" viewBox="0 0 24 24" fill="none" stroke="#a3b5fb" stroke-width="2" stroke-linecap="round" stroke-linejoin="round"><path d="M10 2h4"/><path d="m12 14 3-3"/><circle cx="12" cy="14" r="8"/></svg>
<div class="a t" id="t87" style="top:760.5px;font-size:19px;line-height:25px;color:#a3b5fb;left:1039px;letter-spacing:0.84px;">12ms</div>
<div class="a" style="left:677px;top:835px;width:40px;height:38px;background:#171a20;border:1px solid #1d212d;border-radius:3px;"></div>
<svg class="a" style="left:688px;top:844px;" width="18" height="18" viewBox="0 0 24 24" fill="none" stroke="#c0c1c3" stroke-width="1.8" stroke-linecap="round" stroke-linejoin="round"><path d="M11 20A7 7 0 0 1 9.800 6.100C15.500 5 17 4.480 19 2c1 2 2 4.180 2 8 0 5.500-4.780 10-10 10Z"/><path d="M2 21c0-3 1.850-5.360 5.080-6C9.500 14.520 12 13 13 12"/></svg>
<div class="a t" id="t88" style="top:841.2px;font-size:19px;line-height:25px;color:#ffffff;font-family:'DejaVu Sans Mono', 'Liberation Mono', monospace;left:725px;letter-spacing:0.48px;">HTTP GET /dispatch</div>
<div class="a" style="left:677.2px;top:875px;width:3.3px;height:24px;background:#4cc9f0;border-radius:1px;"></div>
<div class="a t" id="t89" style="top:873.5px;font-size:19px;line-height:25px;color:#c0c1c3;left:688px;letter-spacing:0.75px;">frontend</div>
<div class="a t" id="t90" style="top:873.5px;font-size:19px;line-height:25px;color:#c0c1c3;left:774.5px;">·</div>
<div class="a t" id="t91" style="top:873.5px;font-size:19px;line-height:25px;color:#c0c1c3;left:792px;letter-spacing:0.76px;">2ms after start</div>
<div class="a" style="left:1014.5px;top:846.4px;width:176.5px;height:16.2px;background:#4cc9f0;border-radius:2px;"></div>
<svg class="a" style="left:1015px;top:871px;" width="17" height="17" viewBox="0 0 24 24" fill="none" stroke="#7fd8f5" stroke-width="2" stroke-linecap="round" stroke-linejoin="round"><path d="M10 2h4"/><path d="m12 14 3-3"/><circle cx="12" cy="14" r="8"/></svg>
<div class="a t" id="t92" style="top:866.5px;font-size:19px;line-height:25px;color:#7fd8f5;left:1039px;letter-spacing:0.84px;">12ms</div>
<div class="a" style="left:639px;top:942px;width:69px;height:38px;background:#171a20;border:1px solid #1d212d;border-radius:3px;"></div>
<svg class="a" style="left:650px;top:952px;" width="16" height="16" viewBox="0 0 24 24" fill="none" stroke="#c0c1c3" stroke-width="2.2" stroke-linecap="round" stroke-linejoin="round"><path d="m9 18 6-6-6-6"/></svg>
<div class="a t" id="t93" style="top:947.5px;font-size:19px;line-height:25px;color:#c0c1c3;font-family:'DejaVu Sans Mono', 'Liberation Mono', monospace;left:673px;letter-spacing:0.11px;">50</div>
<div class="a t" id="t94" style="top:948.2px;font-size:19px;line-height:25px;color:#ffffff;font-family:'DejaVu Sans Mono', 'Liberation Mono', monospace;left:716px;letter-spacing:0.48px;">HTTP GET /dispatch</div>
<div class="a" style="left:638.3px;top:983px;width:3.3px;height:24px;background:#e3676b;border-radius:1px;"></div>
<div class="a t" id="t95" style="top:981.5px;font-size:19px;line-height:25px;color:#c0c1c3;left:649px;letter-spacing:0.75px;">frontend</div>
<div class="a t" id="t96" style="top:981.5px;font-size:19px;line-height:25px;color:#c0c1c3;left:735.5px;">·</div>
<div class="a t" id="t97" style="top:981.5px;font-size:19px;line-height:25px;color:#c0c1c3;left:753px;letter-spacing:0.76px;">2ms after start</div>
<div class="a" style="left:1014.5px;top:953.4px;width:718.5px;height:16.2px;background:#e5484d;border-radius:2px 0 0 2px;"></div>
<svg class="a" style="left:1015px;top:978px;" width="17" height="17" viewBox="0 0 24 24" fill="none" stroke="#f0b2b1" stroke-width="2" stroke-linecap="round" stroke-linejoin="round"><path d="M10 2h4"/><path d="m12 14 3-3"/><circle cx="12" cy="14" r="8"/></svg>
<div class="a t" id="t98" style="top:973.5px;font-size:19px;line-height:25px;color:#f0b2b1;left:1039px;letter-spacing:1.08px;">277.56ms</div>
<div class="a" style="left:677px;top:1049px;width:57px;height:38px;background:#171a20;border:1px solid #1d212d;border-radius:3px;"></div>
<svg class="a" style="left:688px;top:1059px;" width="16" height="16" viewBox="0 0 24 24" fill="none" stroke="#c0c1c3" stroke-width="2.2" stroke-linecap="round" stroke-linejoin="round"><path d="m6 9 6 6 6-6"/></svg>
<div class="a t" id="t99" style="top:1054.5px;font-size:19px;line-height:25px;color:#c0c1c3;font-family:'DejaVu Sans Mono', 'Liberation Mono', monospace;left:711px;letter-spacing:-0.45px;">2</div>
<div class="a t" id="t100" style="top:1055.2px;font-size:19px;line-height:25px;color:#ffffff;font-family:'DejaVu Sans Mono', 'Liberation Mono', monospace;left:742px;letter-spacing:0.48px;">HTTP GET /dispatch</div>
<div class="a" style="left:677.2px;top:1089px;width:3.3px;height:24px;background:#bd9977;border-radius:1px;"></div>
<div class="a t" id="t101" style="top:1087.5px;font-size:19px;line-height:25px;color:#c0c1c3;left:688px;letter-spacing:0.75px;">frontend</div>
<div class="a t" id="t102" style="top:1087.5px;font-size:19px;line-height:25px;color:#c0c1c3;left:774.5px;">·</div>
<div class="a t" id="t103" style="top:1087.5px;font-size:19px;line-height:25px;color:#c0c1c3;left:792px;letter-spacing:0.76px;">2ms after start</div>
<div class="a" style="left:1014.5px;top:1060.4px;width:176.5px;height:16.2px;background:#bd9977;border-radius:2px;"></div>
<svg class="a" style="left:1015px;top:1085px;" width="17" height="17" viewBox="0 0 24 24" fill="none" stroke="#d3b595" stroke-width="2" stroke-linecap="round" stroke-linejoin="round"><path d="M10 2h4"/><path d="m12 14 3-3"/><circle cx="12" cy="14" r="8"/></svg>
<div class="a t" id="t104" style="top:1080.5px;font-size:19px;line-height:25px;color:#d3b595;left:1039px;letter-spacing:0.84px;">12ms</div>
<div class="a" style="left:677px;top:1155px;width:40px;height:38px;background:#171a20;border:1px solid #1d212d;border-radius:3px;"></div>
<svg class="a" style="left:688px;top:1164px;" width="18" height="18" viewBox="0 0 24 24" fill="none" stroke="#c0c1c3" stroke-width="1.8" stroke-linecap="round" stroke-linejoin="round"><path d="M11 20A7 7 0 0 1 9.800 6.100C15.500 5 17 4.480 19 2c1 2 2 4.180 2 8 0 5.500-4.780 10-10 10Z"/><path d="M2 21c0-3 1.850-5.360 5.080-6C9.500 14.520 12 13 13 12"/></svg>
<div class="a t" id="t105" style="top:1161.2px;font-size:19px;line-height:25px;color:#ffffff;font-family:'DejaVu Sans Mono', 'Liberation Mono', monospace;left:725px;letter-spacing:0.48px;">HTTP GET /dispatch</div>
<div class="a" style="left:677.2px;top:1195px;width:3.3px;height:24px;background:#4cc9f0;border-radius:1px;"></div>
<div class="a t" id="t106" style="top:1193.5px;font-size:19px;line-height:25px;color:#c0c1c3;left:688px;letter-spacing:0.75px;">frontend</div>
<div class="a t" id="t107" style="top:1193.5px;font-size:19px;line-height:25px;color:#c0c1c3;left:774.5px;">·</div>
<div class="a t" id="t108" style="top:1193.5px;font-size:19px;line-height:25px;color:#c0c1c3;left:792px;letter-spacing:0.76px;">2ms after start</div>
<div class="a" style="left:1014.5px;top:1166.4px;width:176.5px;height:16.2px;background:#4cc9f0;border-radius:2px;"></div>
<svg class="a" style="left:1015px;top:1191px;" width="17" height="17" viewBox="0 0 24 24" fill="none" stroke="#7fd8f5" stroke-width="2" stroke-linecap="round" stroke-linejoin="round"><path d="M10 2h4"/><path d="m12 14 3-3"/><circle cx="12" cy="14" r="8"/></svg>
<div class="a t" id="t109" style="top:1186.5px;font-size:19px;line-height:25px;color:#7fd8f5;left:1039px;letter-spacing:0.84px;">12ms</div>
<div class="a" style="left:1749.5px;top:91px;width:11px;height:11px;background:#7190f9;border-radius:2px;"></div>
<div class="a t" id="t110" style="top:82.8px;font-size:19px;line-height:25px;color:#c0c1c3;left:1771px;letter-spacing:0.22px;">Span details</div>
<div class="a" style="left:2112px;top:80px;width:32px;height:32px;background:#16181d;border:1px solid #1d212d;border-radius:3px;"></div>
<svg class="a" style="left:2119px;top:87px" width="18" height="18" viewBox="0 0 18 18"><rect x="1.500" y="1.500" width="15" height="15" rx="2" fill="none" stroke="#fff" stroke-width="2"/><rect x="9.500" y="2" width="6.500" height="14" fill="#fff"/></svg>
<div class="a" style="left:1734px;top:128px;width:425px;height:1px;background:#1d212d;"></div>
<div class="a t" id="t111" style="top:144.0px;font-size:15px;line-height:20px;color:#c0c1c3;left:1749px;letter-spacing:0.35px;-webkit-text-stroke:.300px #c0c1c3;">SPAN ID</div>
<div class="a" style="left:1749px;top:176.5px;width:151px;height:33px;background:#181b24;border:1px solid #1d212d;border-radius:17px;"></div>
<div class="a t" id="t112" style="top:180.3px;font-size:19px;line-height:25px;color:#c0c1c3;left:1760px;letter-spacing:0.31px;">c3c61f...6f7af6</div>
<div class="a t" id="t113" style="top:233.0px;font-size:15px;line-height:20px;color:#c0c1c3;left:1749px;letter-spacing:-0.10px;-webkit-text-stroke:.300px #c0c1c3;">SERVICE</div>
<div class="a" style="left:1749px;top:265.5px;width:159px;height:33px;background:#181b24;border:1px solid #1d212d;border-radius:17px;"></div>
<div class="a t" id="t114" style="top:269.3px;font-size:19px;line-height:25px;color:#c0c1c3;left:1776px;letter-spacing:0.57px;">load-balancer</div>
<div class="a" style="left:1760px;top:279px;width:6px;height:6px;background:#25e192;border-radius:3px;"></div>
<div class="a t" id="t115" style="top:322.0px;font-size:15px;line-height:20px;color:#c0c1c3;left:1749px;letter-spacing:0.22px;-webkit-text-stroke:.300px #c0c1c3;">OPERATION</div>
<div class="a" style="left:1749px;top:354.5px;width:53px;height:33px;background:#181b24;border:1px solid #1d212d;border-radius:17px;"></div>
<div class="a t" id="t116" style="top:358.3px;font-size:19px;line-height:25px;color:#c0c1c3;left:1760px;letter-spacing:0.62px;">/list</div>
<div class="a t" id="t117" style="top:412.0px;font-size:15px;line-height:20px;color:#c0c1c3;left:1749px;letter-spacing:0.27px;-webkit-text-stroke:.300px #c0c1c3;">RELATED SIGNALS</div>
<div class="a" style="left:1749px;top:444px;width:395px;height:42px;background:#13151b;border:1px solid #1d212d;border-radius:3px;"></div>
<div class="a" style="left:1879px;top:445px;width:1px;height:40px;background:#1d212d;"></div>
<div class="a" style="left:2012px;top:445px;width:1px;height:40px;background:#1d212d;"></div>
<svg class="a" style="left:1785px;top:457px;" width="17" height="17" viewBox="0 0 24 24" fill="none" stroke="#c0c1c3" stroke-width="2" stroke-linecap="round" stroke-linejoin="round"><ellipse cx="10" cy="5.500" rx="6" ry="2.500"/><path d="M4 5.500V18a3 3 0 0 0 3 3h6a3 3 0 0 0 3-3V5.500"/><path d="M16 9h5.500L16 15"/><path d="M7.500 11.500h4v3"/><path d="M11.500 14.500v2.500"/></svg>
<div class="a t" id="t118" style="top:455.5px;font-size:16px;line-height:21px;color:#c0c1c3;left:1808px;letter-spacing:0.43px;">Logs</div>
<svg class="a" style="left:1906px;top:457px;" width="17" height="17" viewBox="0 0 24 24" fill="none" stroke="#c0c1c3" stroke-width="2" stroke-linecap="round" stroke-linejoin="round"><path d="M18 20V10"/><path d="M12 20V4"/><path d="M6 20v-6"/></svg>
<div class="a t" id="t119" style="top:455.5px;font-size:16px;line-height:21px;color:#c0c1c3;left:1929px;letter-spacing:0.74px;">Metrics</div>
<svg class="a" style="left:2049px;top:456px;" width="18" height="18" viewBox="0 0 24 24" fill="none" stroke="#c0c1c3" stroke-width="2" stroke-linecap="round" stroke-linejoin="round"><rect x="5" y="3" width="14" height="8" rx="2"/><rect x="2" y="14" width="20" height="7" rx="2"/><path d="M6 17.500h.01"/><path d="M10 17.500h.01"/></svg>
<div class="a t" id="t120" style="top:455.5px;font-size:16px;line-height:21px;color:#c0c1c3;left:2073px;letter-spacing:0.50px;">Infra</div>
<svg class="a" style="left:1758px;top:525px;" width="17" height="17" viewBox="0 0 24 24" fill="none" stroke="#ffffff" stroke-width="2" stroke-linecap="round" stroke-linejoin="round"><path d="m19 21-7-4-7 4V5a2 2 0 0 1 2-2h10a2 2 0 0 1 2 2v16z"/></svg>
<div class="a t" id="t121" style="top:521.5px;font-size:19px;line-height:25px;color:#ffffff;left:1782px;letter-spacing:0.29px;">Tags</div>
<svg class="a" style="left:1871px;top:525px;" width="19" height="19" viewBox="0 0 24 24" fill="none" stroke="#c0c1c3" stroke-width="2" stroke-linecap="round" stroke-linejoin="round"><rect x="2.500" y="4" width="19" height="3.500" rx="1.750"/><path d="M6 7.500c0 3.500 2.500 5.500 6 5.500s6-2 6-5.500"/><path d="M7.500 20.500l1.800-6h5.400l1.800 6z"/></svg>
<div class="a t" id="t122" style="top:521.5px;font-size:19px;line-height:25px;color:#c0c1c3;left:1900px;letter-spacing:0.18px;">Events</div>
<div class="a" style="left:1965px;top:520px;width:28px;height:28px;background:#181b24;border-radius:14px;"></div>
<div class="a t" id="t123" style="top:523.0px;font-size:17px;line-height:22px;color:#c0c1c3;left:1979px;transform:translateX(-50%);">3</div>
<div class="a" style="left:2100px;top:514px;width:44px;height:52px;background:#181b24;border-radius:3px 3px 0 0;"></div>
<svg class="a" style="left:2111px;top:524px;" width="21" height="21" viewBox="0 0 24 24" fill="none" stroke="#c0c1c3" stroke-width="2" stroke-linecap="round" stroke-linejoin="round"><circle cx="11" cy="11" r="8"/><path d="m21 21-4.3-4.3"/></svg>
<div class="a" style="left:1734px;top:565px;width:425px;height:1px;background:#1d212d;"></div>
<div class="a" style="left:1749px;top:563px;width:82px;height:3.5px;background:#5577ee;border-radius:2px 2px 0 0;"></div>
<div class="a t" id="t124" style="top:581.8px;font-size:19px;line-height:25px;color:#ffffff;left:1749px;letter-spacing:0.77px;">http.method</div>
<div class="a" style="left:1749px;top:620.0px;width:59px;height:33px;background:#1c1812;border:1px solid #3a2f22;border-radius:17px;"></div>
<div class="a t" id="t125" style="top:623.8px;font-size:19px;line-height:25px;color:#c8a47e;left:1760px;letter-spacing:-1.53px;">GET</div>
<div class="a t" id="t126" style="top:680.5px;font-size:19px;line-height:25px;color:#ffffff;left:1749px;letter-spacing:0.61px;">net.host.port</div>
<div class="a" style="left:1749px;top:718.5px;width:71px;height:33px;background:#181b24;border:1px solid #1d212d;border-radius:17px;"></div>
<div class="a t" id="t127" style="top:722.3px;font-size:19px;line-height:25px;color:#c0c1c3;font-family:'DejaVu Sans Mono', 'Liberation Mono', monospace;left:1760px;letter-spacing:0.74px;">5002</div>
<div class="a t" id="t128" style="top:779.5px;font-size:19px;line-height:25px;color:#ffffff;left:1749px;letter-spacing:0.45px;">telemetry.sdk.name</div>
<div class="a" style="left:1749px;top:817.5px;width:149px;height:33px;background:#181b24;border:1px solid #1d212d;border-radius:17px;"></div>
<div class="a t" id="t129" style="top:821.3px;font-size:19px;line-height:25px;color:#c0c1c3;left:1760px;letter-spacing:0.55px;">opentelemetry</div>
<div class="a t" id="t130" style="top:878.5px;font-size:19px;line-height:25px;color:#ffffff;left:1749px;letter-spacing:0.43px;">telemetry.sdk.language</div>
<div class="a" style="left:1749px;top:916.5px;width:109px;height:33px;background:#181b24;border:1px solid #1d212d;border-radius:17px;"></div>
<div class="a t" id="t131" style="top:920.3px;font-size:19px;line-height:25px;color:#c0c1c3;left:1787px;letter-spacing:0.79px;">python</div>
<div class="a t" id="t132" style="top:976.5px;font-size:19px;line-height:25px;color:#ffffff;left:1749px;letter-spacing:0.49px;">telemetry.sdk.version</div>
<div class="a" style="left:1749px;top:1014.5px;width:95px;height:33px;background:#181b24;border:1px solid #1d212d;border-radius:17px;"></div>
<div class="a t" id="t133" style="top:1018.3px;font-size:19px;line-height:25px;color:#c0c1c3;font-family:'DejaVu Sans Mono', 'Liberation Mono', monospace;left:1760px;letter-spacing:0.67px;">1.17.0</div>
<div class="a t" id="t134" style="top:1075.5px;font-size:19px;line-height:25px;color:#ffffff;left:1749px;letter-spacing:0.76px;">http.host</div>
<div class="a" style="left:1749px;top:1113.5px;width:185px;height:33px;background:#181b24;border:1px solid #1d212d;border-radius:17px;"></div>
<div class="a t" id="t135" style="top:1117.3px;font-size:19px;line-height:25px;color:#c0c1c3;left:1760px;letter-spacing:0.49px;">sample-flask:5002</div>
<div class="a t" id="t136" style="top:1174.5px;font-size:19px;line-height:25px;color:#ffffff;left:1749px;letter-spacing:0.44px;">http.status_code</div>
<svg class="a" style="left:1759px;top:924px" width="18" height="18" viewBox="0 0 18 18"><path d="M8.800 1C6 1 5.500 2.200 5.500 3.200V5h3.600v.700H3.600C2.300 5.700 1 6.600 1 9s1.100 3.400 2.400 3.400h1.400v-1.900c0-1.400 1.100-2.400 2.400-2.400h3.500c1.100 0 2-.900 2-2V3.200C12.700 2 11.600 1 8.800 1z" fill="#3d7ab0"/><circle cx="7.100" cy="3.100" r=".700" fill="#fff"/><path d="M9.200 17c2.800 0 3.300-1.200 3.300-2.200V13H8.900v-.700h5.500c1.300 0 2.600-.900 2.600-3.300s-1.100-3.400-2.400-3.400h-1.400v1.900c0 1.400-1.100 2.400-2.400 2.400H7.300c-1.100 0-2 .900-2 2v2.900C5.300 16 6.400 17 9.200 17z" fill="#f7d14a"/><circle cx="10.900" cy="14.900" r=".700" fill="#fff"/></svg>
</div>
</body></html>
